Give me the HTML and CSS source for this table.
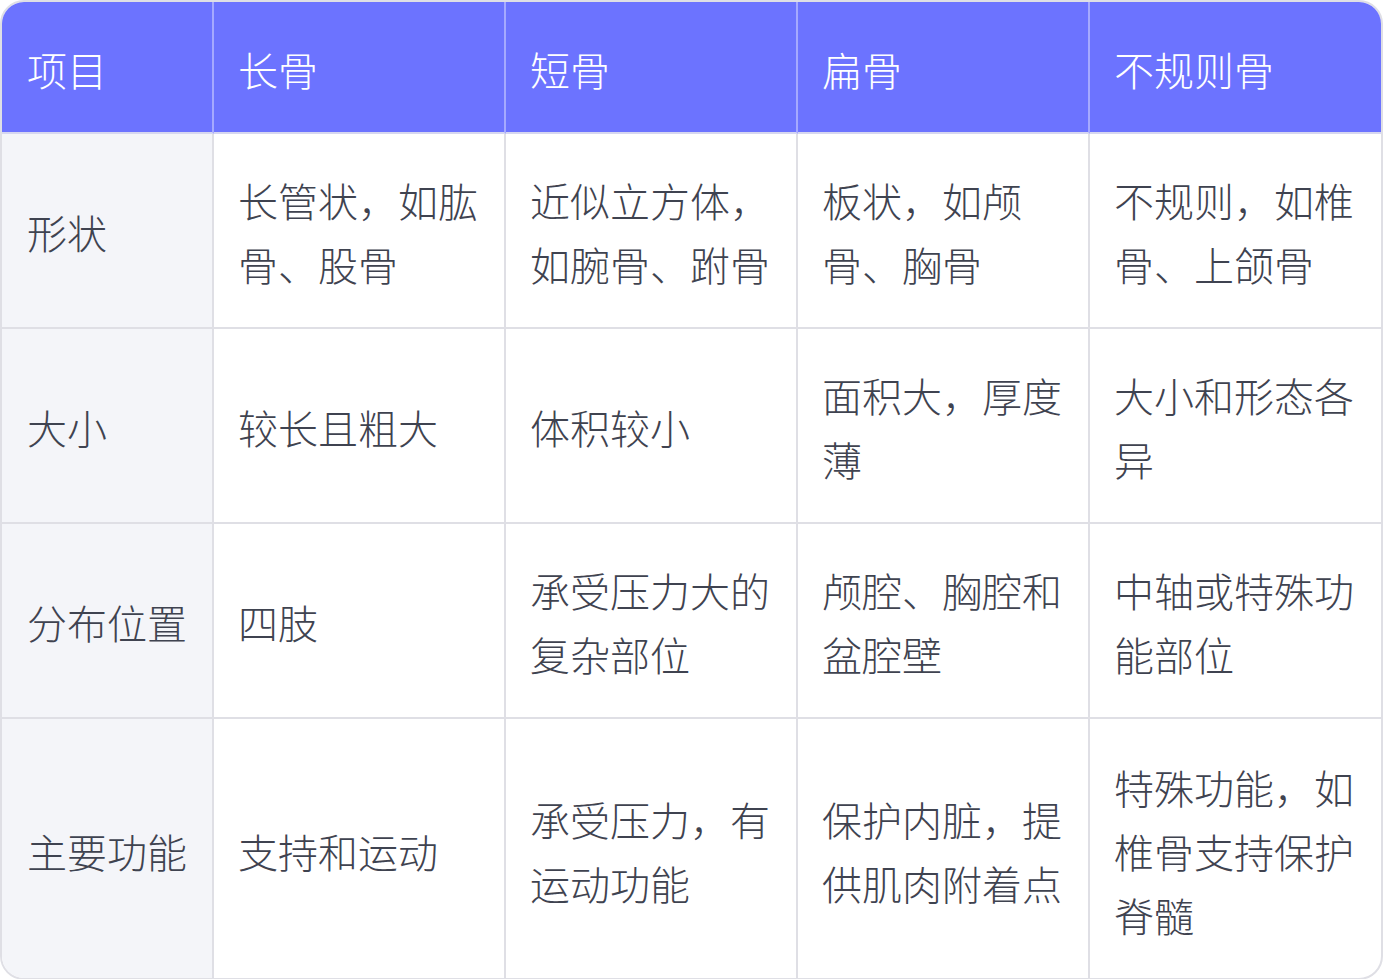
FILE: index.html
```html
<!DOCTYPE html>
<html lang="zh-CN">
<head>
<meta charset="utf-8">
<title>骨的分类</title>
<link rel="stylesheet" href="styles.css">
</head>
<body>
<table class="bones">
  <colgroup>
    <col class="col-first">
    <col class="col-mid">
    <col class="col-mid">
    <col class="col-mid">
    <col>
  </colgroup>
  <thead>
    <tr>
      <th class="c1">项目</th>
      <th>长骨</th>
      <th>短骨</th>
      <th>扁骨</th>
      <th>不规则骨</th>
    </tr>
  </thead>
  <tbody>
    <tr>
      <td class="c1">形状</td>
      <td>长管状，如肱骨、股骨</td>
      <td>近似立方体，如腕骨、跗骨</td>
      <td>板状，如颅骨、胸骨</td>
      <td>不规则，如椎骨、上颌骨</td>
    </tr>
    <tr>
      <td class="c1">大小</td>
      <td>较长且粗大</td>
      <td>体积较小</td>
      <td>面积大，厚度薄</td>
      <td>大小和形态各异</td>
    </tr>
    <tr>
      <td class="c1">分布位置</td>
      <td>四肢</td>
      <td>承受压力大的复杂部位</td>
      <td>颅腔、胸腔和盆腔壁</td>
      <td>中轴或特殊功能部位</td>
    </tr>
    <tr class="last">
      <td class="c1">主要功能</td>
      <td>支持和运动</td>
      <td>承受压力，有运动功能</td>
      <td>保护内脏，提供肌肉附着点</td>
      <td>特殊功能，如椎骨支持保护脊髓</td>
    </tr>
  </tbody>
</table>
</body>
</html>
```

FILE: styles.css
```css
html, body {
  margin: 0;
  padding: 0;
  background: #ffffff;
}

.bones {
  width: 1383px;
  border-collapse: separate;
  border-spacing: 0;
  border: 2px solid #dfdfe5;
  border-radius: 24px;
  overflow: hidden;
  font-family: "Noto Sans CJK SC", "Noto Sans", sans-serif;
  font-size: 40px;
  line-height: 64px;
  color: #3f4350;
  table-layout: fixed;
}

.bones .col-first {
  width: 212px;
}

.bones .col-mid {
  width: 292px;
}

.bones th,
.bones td {
  box-sizing: border-box;
  padding: 34px 22px 31px 24px;
  text-align: left;
  vertical-align: middle;
  font-weight: 300;
  border-right: 2px solid #dfdfe5;
  border-bottom: 2px solid #dfdfe5;
}

.bones td.c1,
.bones th.c1 {
  padding-left: 25px;
}

.bones th:last-child,
.bones td:last-child {
  border-right: none;
}

.bones tbody tr:last-child td {
  border-bottom: none;
}

.bones th {
  padding-top: 35px;
  background: #6c73ff;
  color: #ffffff;
  border-right-color: #a5a9ff;
  border-bottom-color: #d6d7f0;
}

.bones tr.last td {
  padding-top: 36px;
  padding-bottom: 31px;
}

.bones td.c1 {
  background: #f4f5f9;
}
```
